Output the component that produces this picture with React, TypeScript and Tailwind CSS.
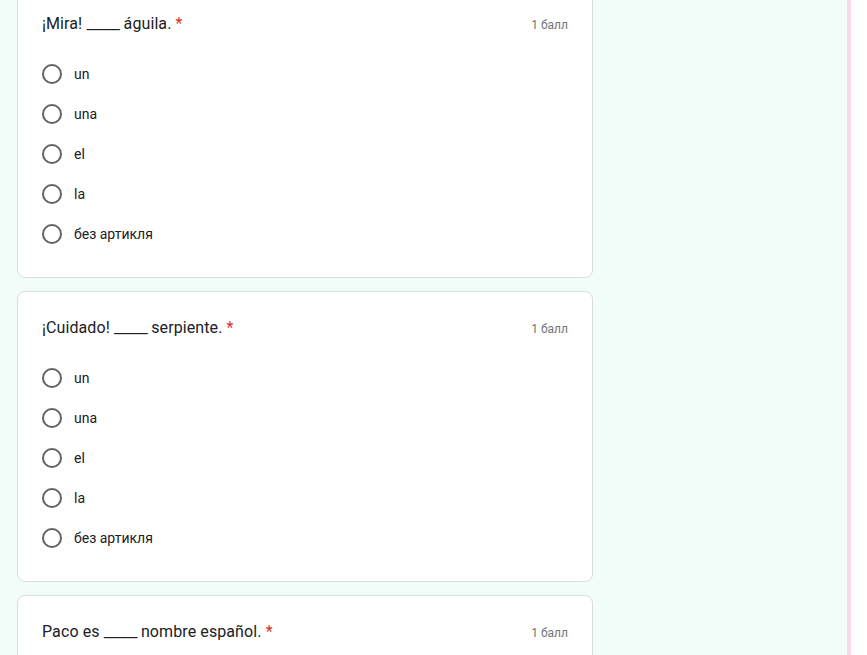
const questions = [
  { before: '¡Mira!', after: 'águila.' },
  { before: '¡Cuidado!', after: 'serpiente.' },
  { before: 'Paco es', after: 'nombre español.' },
];

const options = ['un', 'una', 'el', 'la', 'без артикля'];

function QuestionCard({ before, after }: { before: string; after: string }) {
  return (
    <div className="shrink-0 rounded-lg border border-[#dadce0] bg-white px-6 pt-6 pb-[23px]">
      <div className="flex h-6 items-baseline justify-between leading-6">
        <div className="text-base tracking-[0.1px] text-[#202124]">
          {before} <span className="tracking-[-0.6px]">_____</span> {after}{' '}
          <span className="text-[#d93025]">*</span>
        </div>
        <div className="text-xs text-[#70757a]">1 балл</div>
      </div>
      <div className="mt-[18px] flex flex-col">
        {options.map((opt) => (
          <label key={opt} className="flex h-10 items-center">
            <span className="h-5 w-5 rounded-full border-2 border-[#5f6368]" />
            <span className="ml-3 text-sm text-[#202124]">{opt}</span>
          </label>
        ))}
      </div>
    </div>
  );
}

export default function App() {
  return (
    <div
      className="flex h-[655px] w-full overflow-hidden bg-white"
      style={{ fontFamily: 'Roboto, "Noto Sans", Arial, sans-serif' }}
    >
      <div className="w-[847px] shrink-0 bg-[#f0fdf9]">
        <div className="ml-[17px] mt-[-13px] flex w-[576px] flex-col gap-[13px]">
          {questions.map((q) => (
            <QuestionCard key={q.before} before={q.before} after={q.after} />
          ))}
        </div>
      </div>
      <div className="w-1 shrink-0 bg-[#fcd9ec]" />
      <div className="flex-1 bg-white" />
    </div>
  );
}
